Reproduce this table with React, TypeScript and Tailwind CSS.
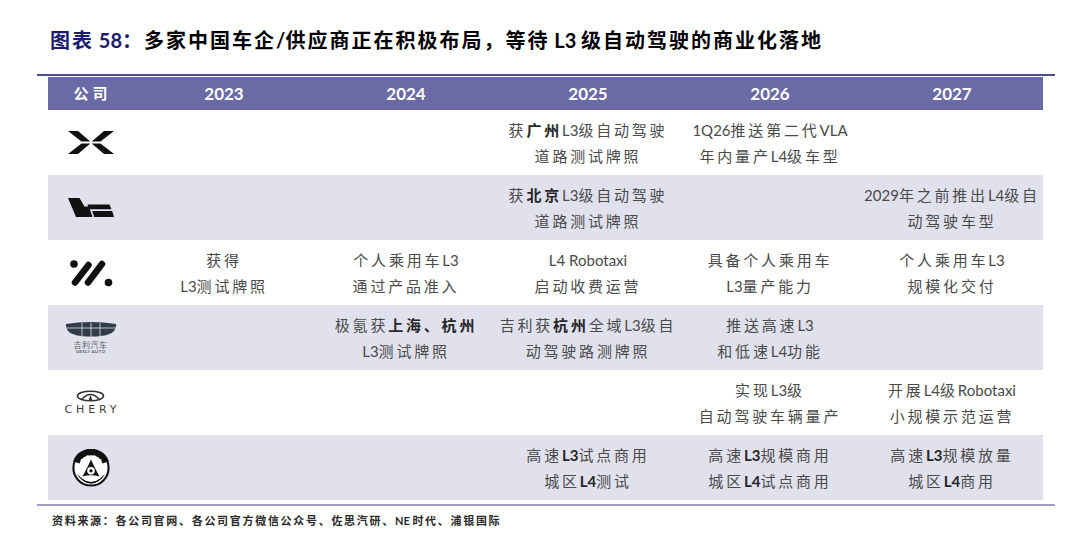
import React from "react";

type Seg = string | { b: string };
type Line = Seg[];

const CJK_SPLIT = /([\u2E80-\u9FFF\u3000-\u303F\uFF00-\uFFEF]+)/;
const CJK_TEST = /[\u2E80-\u9FFF\u3000-\u303F\uFF00-\uFFEF]/;

function Runs({ s, cjk, lat }: { s: string; cjk: string; lat: string }) {
  const parts = s.split(CJK_SPLIT).filter((p) => p.length > 0);
  return (
    <>
      {parts.map((p, i) =>
        CJK_TEST.test(p) ? (
          <span key={i} className={cjk}>
            {p}
          </span>
        ) : (
          <span key={i} className={lat}>
            {p}
          </span>
        )
      )}
    </>
  );
}

const cjkN = "font-['Noto_Sans_CJK_SC',sans-serif] tracking-[2.8px]";
const latN = "font-[Lato,sans-serif]";
const cjkB = "font-['Noto_Sans_CJK_SC',sans-serif] tracking-[2.8px] font-bold text-[#262626]";
const latB = "font-[Lato,sans-serif] font-bold text-[#262626]";

function CellText({ lines }: { lines: Line[] | null }) {
  if (!lines) return <div />;
  return (
    <div className="flex flex-col items-center justify-center text-[15px] leading-[26px] text-[#4a4a4a] whitespace-nowrap">
      {lines.map((line, li) => (
        <div key={li}>
          {line.map((seg, si) =>
            typeof seg === "string" ? (
              <Runs key={si} s={seg} cjk={cjkN} lat={latN} />
            ) : (
              <Runs key={si} s={seg.b} cjk={cjkB} lat={latB} />
            )
          )}
        </div>
      ))}
    </div>
  );
}

function XpengLogo() {
  return (
    <svg width="46" height="23" viewBox="0 0 46 23">
      <path d="M0 0 L10 0 L22.3 10.6 L13.5 10.6 Z" fill="#111" />
      <path d="M0 23 L10 23 L22.3 12.4 L13.5 12.4 Z" fill="#111" />
      <path d="M46 0 L36 0 L23.7 10.6 L32.5 10.6 Z" fill="#111" />
      <path d="M46 23 L36 23 L23.7 12.4 L32.5 12.4 Z" fill="#111" />
    </svg>
  );
}

function LiLogo() {
  return (
    <svg width="46" height="19" viewBox="0 0 46 19">
      <path d="M0 0 L11.5 0 L16.5 8.5 L21 8.5 L24.5 19 L8 19 Z" fill="#111" />
      <path d="M19.5 6.5 L41.5 6.5 L43.5 11.3 L21.2 11.3 Z" fill="#111" />
      <path d="M24.2 13 L44.2 13 L46 19 L26.2 19 Z" fill="#111" />
    </svg>
  );
}

function DotsLogo() {
  return (
    <svg width="44" height="28" viewBox="0 0 44 28">
      <circle cx="5" cy="5" r="3.8" fill="#111" />
      <line x1="6" y1="23.5" x2="19.5" y2="6" stroke="#111" strokeWidth="6.5" strokeLinecap="round" />
      <line x1="19" y1="23.5" x2="33" y2="5" stroke="#111" strokeWidth="6.5" strokeLinecap="round" />
      <circle cx="39.5" cy="23.5" r="3.8" fill="#111" />
    </svg>
  );
}

function GeelyLogo() {
  return (
    <div className="flex flex-col items-center">
      <svg width="52" height="16" viewBox="0 0 52 16">
        <path
          d="M1 3 Q26 -1 51 3 Q51.5 7 49 10 Q44 15.5 26 15.5 Q8 15.5 3 10 Q0.5 7 1 3 Z"
          fill="#303c46"
        />
        <line x1="1" y1="7" x2="51" y2="7" stroke="#e1e1ee" strokeWidth="0.8" />
        <line x1="17" y1="2" x2="17" y2="15.5" stroke="#e1e1ee" strokeWidth="0.8" />
        <line x1="26" y1="1.5" x2="26" y2="15.5" stroke="#e1e1ee" strokeWidth="0.8" />
        <line x1="35" y1="2" x2="35" y2="15.5" stroke="#e1e1ee" strokeWidth="0.8" />
      </svg>
      <div className="mt-[3px] text-[8px] leading-[9px] text-[#5a5f66] font-['Noto_Sans_CJK_SC',sans-serif] tracking-[0.5px]">
        吉利汽车
      </div>
      <div className="text-[4.5px] leading-[6px] text-[#5a5f66] font-[Lato,sans-serif] font-bold tracking-[0.3px]">
        GEELY AUTO
      </div>
    </div>
  );
}

function CheryLogo() {
  return (
    <div className="flex flex-col items-center">
      <svg width="29" height="12" viewBox="0 0 29 12">
        <ellipse cx="14.5" cy="6" rx="13" ry="4.8" fill="none" stroke="#333" strokeWidth="1.6" />
        <path d="M5.5 9.5 Q14.5 -0.5 23.5 9.5" fill="none" stroke="#333" strokeWidth="1.4" />
        <path d="M12.3 11 L14.5 5 L16.7 11 Z" fill="#333" />
      </svg>
      <div className="mt-[2px] text-[11px] leading-[12px] text-[#3c3c3c] font-['DejaVu_Sans',sans-serif] tracking-[3.8px] pl-[3.8px]">
        CHERY
      </div>
    </div>
  );
}

function RoundLogo() {
  return (
    <svg width="38" height="38" viewBox="0 0 40 40">
      <circle cx="20" cy="20" r="18.5" fill="#fff" stroke="#111" strokeWidth="2.2" />
      <path d="M4.5 14 A16.5 16.5 0 0 1 35.5 14" fill="none" stroke="#111" strokeWidth="7" />
      <circle cx="10" cy="11.5" r="1" fill="#fff" />
      <circle cx="16.5" cy="7.5" r="1" fill="#fff" />
      <circle cx="23.5" cy="7.5" r="1" fill="#fff" />
      <circle cx="30" cy="11.5" r="1" fill="#fff" />
      <path d="M20 11 Q23 18 29 29 Q20 26 11 29 Q17 18 20 11 Z" fill="#111" />
      <circle cx="20" cy="23" r="4" fill="#fff" />
      <circle cx="20" cy="23" r="1.8" fill="#111" />
      <path d="M6 27 A16 16 0 0 0 34 27" fill="none" stroke="#111" strokeWidth="0.8" />
      <path d="M7.5 28.5 A15 15 0 0 0 32.5 28.5" fill="none" stroke="#111" strokeWidth="0.8" />
      <path d="M9 30 A14 14 0 0 0 31 30" fill="none" stroke="#111" strokeWidth="0.8" />
      <path d="M10.5 31.5 A13 13 0 0 0 29.5 31.5" fill="none" stroke="#111" strokeWidth="0.8" />
      <path d="M12 33 A12 12 0 0 0 28 33" fill="none" stroke="#111" strokeWidth="0.8" />
    </svg>
  );
}

type Row = { logo: React.ReactNode; cells: (Line[] | null)[] };

const rows: Row[] = [
  {
    logo: <XpengLogo />,
    cells: [
      null,
      null,
      [["获", { b: "广州" }, "L3级自动驾驶"], ["道路测试牌照"]],
      [["1Q26推送第二代VLA"], ["年内量产L4级车型"]],
      null,
    ],
  },
  {
    logo: <LiLogo />,
    cells: [
      null,
      null,
      [["获", { b: "北京" }, "L3级自动驾驶"], ["道路测试牌照"]],
      null,
      [["2029年之前推出L4级自"], ["动驾驶车型"]],
    ],
  },
  {
    logo: <DotsLogo />,
    cells: [
      [["获得"], ["L3测试牌照"]],
      [["个人乘用车L3"], ["通过产品准入"]],
      [["L4 Robotaxi"], ["启动收费运营"]],
      [["具备个人乘用车"], ["L3量产能力"]],
      [["个人乘用车L3"], ["规模化交付"]],
    ],
  },
  {
    logo: <GeelyLogo />,
    cells: [
      null,
      [["极氪获", { b: "上海、杭州" }], ["L3测试牌照"]],
      [["吉利获", { b: "杭州" }, "全域L3级自"], ["动驾驶路测牌照"]],
      [["推送高速L3"], ["和低速L4功能"]],
      null,
    ],
  },
  {
    logo: <CheryLogo />,
    cells: [
      null,
      null,
      null,
      [["实现L3级"], ["自动驾驶车辆量产"]],
      [["开展L4级Robotaxi"], ["小规模示范运营"]],
    ],
  },
  {
    logo: <RoundLogo />,
    cells: [
      null,
      null,
      [["高速", { b: "L3" }, "试点商用"], ["城区", { b: "L4" }, "测试"]],
      [["高速", { b: "L3" }, "规模商用"], ["城区", { b: "L4" }, "试点商用"]],
      [["高速", { b: "L3" }, "规模放量"], ["城区", { b: "L4" }, "商用"]],
    ],
  },
];

const years = ["2023", "2024", "2025", "2026", "2027"];

export default function App() {
  return (
    <div className="w-[1080px] h-[535px] bg-white overflow-hidden">
      <div className="h-[74px] pl-[50px] pt-[29px]">
        <div className="text-[20px] leading-[22px] font-bold whitespace-nowrap text-black">
          <span className="font-['Noto_Sans_CJK_SC',sans-serif] tracking-[2px] text-[#1c1c6e]">图表</span>
          <span className="font-[Lato,sans-serif] text-[#1c1c6e]"> 58</span>
          <span className="font-['Noto_Sans_CJK_SC',sans-serif] tracking-[2px] text-[#1c1c6e]">：</span>
          <span className="font-['Noto_Sans_CJK_SC',sans-serif] tracking-[2px]">多家中国车企</span>
          <span className="font-[Lato,sans-serif]">/</span>
          <span className="font-['Noto_Sans_CJK_SC',sans-serif] tracking-[2px]">供应商正在积极布局，等待</span>
          <span className="font-[Lato,sans-serif]"> L3 </span>
          <span className="font-['Noto_Sans_CJK_SC',sans-serif] tracking-[2px]">级自动驾驶的商业化落地</span>
        </div>
      </div>
      <div className="ml-[37px] w-[1018px] h-[1.5px] bg-[#4d4d8f]" />
      <div className="ml-[48px] mt-[1.5px] w-[995px]">
        <div className="grid grid-cols-[85px_repeat(5,182px)] h-[33px] bg-[#6a6aa4] text-white items-center">
          <div className="flex justify-center">
            <span className="font-['Noto_Sans_CJK_SC',sans-serif] font-bold text-[15px] tracking-[4px] pl-[4px]">公司</span>
          </div>
          {years.map((y) => (
            <div key={y} className="flex justify-center font-[Lato,sans-serif] font-bold text-[17px]">
              {y}
            </div>
          ))}
        </div>
        {rows.map((row, ri) => (
          <div
            key={ri}
            className={
              ri % 2 === 1
                ? "grid grid-cols-[85px_repeat(5,182px)] h-[65px] bg-[#e1e1ee]"
                : "grid grid-cols-[85px_repeat(5,182px)] h-[65px] bg-white"
            }
          >
            <div className="flex items-center justify-center">{row.logo}</div>
            {row.cells.map((c, ci) => (
              <div key={ci} className="flex items-center justify-center">
                <CellText lines={c} />
              </div>
            ))}
          </div>
        ))}
      </div>
      <div className="ml-[37px] w-[1018px] mt-[4px] h-[1.5px] bg-[#9e9ec8]" />
      <div className="pl-[52px] mt-[7px] text-[11px] leading-[14px] font-bold text-[#2a2a2a] whitespace-nowrap">
        <Runs
          s="资料来源：各公司官网、各公司官方微信公众号、佐思汽研、NE 时代、浦银国际"
          cjk="font-['Noto_Sans_CJK_SC',sans-serif] tracking-[1.7px]"
          lat="font-[Lato,sans-serif]"
        />
      </div>
    </div>
  );
}
